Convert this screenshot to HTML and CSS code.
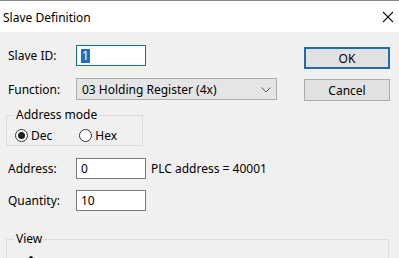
FILE: index.html
```html
<!DOCTYPE html>
<html>
<head>
<meta charset="utf-8">
<link rel="stylesheet" href="styles.css">
</head>
<body>
<div class="window">
  <div class="titlebar">
    <span class="title">Slave Definition</span>
    <svg class="close" width="12" height="12" viewBox="0 0 12 12"><path d="M1 1 L11 11 M11 1 L1 11" stroke="#111" stroke-width="1.1" fill="none"/></svg>
  </div>
  <div class="content">
    <div class="main">
      <div class="form">
        <div class="row r-slave">
          <label class="lbl">Slave ID:</label>
          <div class="input focused"><span class="sel">1</span></div>
        </div>
        <div class="row r-func">
          <label class="lbl">Function:</label>
          <div class="select">
            <span>03 Holding Register (4x)</span>
            <svg class="chev" width="10" height="6" viewBox="0 0 10 6"><path d="M0.5 0.5 L5 5 L9.5 0.5" stroke="#555" stroke-width="1" fill="none"/></svg>
          </div>
        </div>
        <fieldset class="group g-mode">
          <legend>Address mode</legend>
          <div class="radios">
            <span class="radio checked"></span><span class="rtext">Dec</span>
            <span class="radio hex"></span><span class="rtext">Hex</span>
          </div>
        </fieldset>
        <div class="row r-addr">
          <label class="lbl">Address:</label>
          <div class="input">0</div>
          <span class="plc">PLC address = 40001</span>
        </div>
        <div class="row r-qty">
          <label class="lbl">Quantity:</label>
          <div class="input">10</div>
        </div>
      </div>
      <div class="buttons">
        <button class="btn ok">OK</button>
        <button class="btn cancel">Cancel</button>
      </div>
    </div>
    <fieldset class="group g-view">
      <legend>View</legend>
      <div class="radios view-radios">
        <span class="radio dark"></span>
      </div>
    </fieldset>
  </div>
</div>
</body>
</html>
```
FILE: styles.css
```css
html, body {
  margin: 0;
  padding: 0;
  background: #f0f0f0;
}
body {
  width: 399px;
  height: 258px;
  overflow: hidden;
  font-family: "Noto Sans", "Open Sans", sans-serif;
  font-size: 12px;
  color: #000;
}
.window {
  width: 399px;
  height: 258px;
  overflow: hidden;
}
.titlebar {
  height: 31px;
  border-top: 1px solid #8a8a8a;
  background: #ffffff;
  display: flex;
  align-items: center;
  justify-content: space-between;
  padding: 0 5px 0 3px;
}
.title {
  font-size: 12px;
  margin-top: 2px;
}
.close {
  margin-top: 1px;
}
.content {
  background: #f0f0f0;
}
.main {
  display: flex;
}
.form {
  flex: 1;
}
.row {
  display: flex;
  align-items: center;
  padding-left: 8px;
}
.lbl {
  width: 68px;
}
.r-slave { margin-top: 13px; }
.r-func { margin-top: 12px; }
.r-addr { margin-top: 12px; }
.r-qty { margin-top: 11px; }
.input {
  box-sizing: border-box;
  width: 70px;
  height: 21px;
  border: 1px solid #7a7a7a;
  background: #fff;
  padding-left: 4px;
  line-height: 19px;
}
.input.focused {
  border-color: #1c6a9e;
}
.sel {
  background: #1a72c4;
  color: #fff;
  padding: 0 1px;
  display: inline-block;
  line-height: 14px;
}
.select {
  box-sizing: border-box;
  width: 201px;
  height: 22px;
  border: 1px solid #adadad;
  background: #e5e5e5;
  display: flex;
  align-items: center;
  justify-content: space-between;
  padding: 0 5px 0 5px;
}
.chev {
  margin-top: 1px;
}
.plc {
  margin-left: 5px;
}
.group {
  margin: 0;
  padding: 0 0 3px 0;
  border: 1px solid #dcdcdc;
  min-width: 0;
}
.group legend {
  padding: 0 2px;
  margin-left: 7px;
  line-height: 16px;
}
.g-mode {
  margin: 7px 0 0 6px;
  width: 137px;
  box-sizing: border-box;
}
.radios {
  display: flex;
  align-items: center;
  margin-top: 6px;
  padding-left: 8px;
  height: 13px;
}
.radio {
  box-sizing: border-box;
  width: 13px;
  height: 13px;
  border: 1px solid #333;
  border-radius: 50%;
  background: #fff;
  position: relative;
  flex: none;
}
.radio.checked::after {
  content: "";
  position: absolute;
  left: 2px;
  top: 2px;
  width: 7px;
  height: 7px;
  border-radius: 50%;
  background: #222;
}
.radio.dark {
  border-color: #111;
  background: #222;
  width: 6px;
}
.radio.hex {
  margin-left: 27px;
}
.rtext {
  margin-left: 3px;
}
.buttons {
  width: 86px;
  margin-right: 9px;
  padding-top: 15px;
  display: flex;
  flex-direction: column;
}
.btn {
  box-sizing: border-box;
  font-family: inherit;
  font-size: 12px;
  height: 22px;
  padding: 0;
  background: #e1e1e1;
  border: 1px solid #adadad;
  color: #000;
}
.btn.ok {
  border: 2px solid #1f6ca8;
}
.btn.cancel {
  margin-top: 10px;
}
.g-view {
  margin: 20px 0 0 6px;
  width: 383px;
  box-sizing: border-box;
  height: 60px;
}
.view-radios {
  margin-top: 9px;
  padding-left: 21px;
}
```
